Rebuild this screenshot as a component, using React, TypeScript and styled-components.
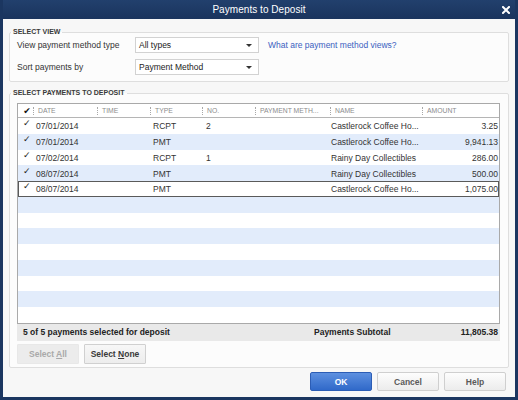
import React from 'react';
import styled, { createGlobalStyle, css } from 'styled-components';

const Global = createGlobalStyle`
  html, body { margin: 0; padding: 0; background: #1b3660; }
  body { width: 518px; height: 400px; overflow: hidden; font-family: "Liberation Sans", Arial, sans-serif; }
  * { box-sizing: border-box; }
`;

const COLS = '15px 64px 53px 52px 53px 75px 92px 77px';

const Window = styled.div`
  width: 518px;
  height: 400px;
  display: flex;
  flex-direction: column;
  background: #1b3660;
  padding: 0 3px 3px 3px;
`;

const TitleBar = styled.div`
  height: 19px;
  flex: none;
  display: grid;
  grid-template-columns: 1fr auto 1fr;
  align-items: center;
  background: linear-gradient(#22406d, #1a345d);
  color: #fff;
  font-size: 10px;
`;

const Title = styled.div`
  grid-column: 2;
  letter-spacing: 0.05px;
`;

const CloseBox = styled.div`
  grid-column: 3;
  justify-self: end;
  display: flex;
  align-items: center;
  padding-right: 5px;
`;

const Content = styled.div`
  flex: 1;
  display: flex;
  flex-direction: column;
  background: #f7f7f7;
  padding: 0 6px;
`;

const Fieldset = styled.fieldset<{ $top: number }>`
  margin: ${p => p.$top}px 0 0 0;
  padding: 0;
  min-width: 0;
  border: 1px solid #dedede;
  border-radius: 2px;
  background: #fcfcfc;
`;

const Legend = styled.legend`
  margin-left: 1px;
  padding: 0 2px;
  font-size: 7px;
  line-height: 10px;
  font-weight: bold;
  color: #3a3a3a;
  text-transform: uppercase;
`;

const ViewGrid = styled.div`
  display: grid;
  grid-template-columns: 109px 124px auto;
  column-gap: 9px;
  row-gap: 6px;
  align-items: center;
  padding: 0 7px 6px 7px;
`;

const Label = styled.div`
  font-size: 8.5px;
  color: #333;
`;

const Select = styled.div`
  height: 16px;
  display: flex;
  align-items: center;
  justify-content: space-between;
  padding: 0 6px 0 3px;
  background: #fff;
  border: 1px solid #d2d2d2;
  font-size: 8.5px;
  color: #222;
`;

const Arrow = styled.span`
  width: 0;
  height: 0;
  border-left: 3px solid transparent;
  border-right: 3px solid transparent;
  border-top: 3px solid #333;
`;

const Link = styled.a`
  font-size: 8.5px;
  color: #3b5fc0;
  text-decoration: none;
`;

const Inner = styled.div`
  padding: 5px 8px 3px 7px;
  display: flex;
  flex-direction: column;
`;

const Table = styled.div`
  border: 1px solid #a9a9a9;
  background: #fff;
`;

const HeadRow = styled.div`
  display: grid;
  grid-template-columns: ${COLS};
  height: 14px;
  border-bottom: 1px solid #b5b5b5;
  background: #fff;
`;

const HeadCell = styled.div<{ $sep?: boolean }>`
  position: relative;
  display: flex;
  align-items: center;
  padding-left: 5px;
  font-size: 6.8px;
  color: #8c8c8c;
  white-space: nowrap;
  overflow: hidden;
  ${p => p.$sep && css`
    &::before {
      content: '';
      position: absolute;
      left: 0;
      top: 3px;
      height: 8px;
      border-left: 1px dotted #a8a8a8;
    }
  `}
`;

const HeadCheck = styled.div`
  display: flex;
  align-items: center;
  justify-content: center;
  font-family: "DejaVu Sans", sans-serif;
  font-size: 9px;
  font-weight: bold;
  color: #111;
  padding-left: 3px;
`;

const Row = styled.div<{ $alt: boolean; $sel?: boolean }>`
  display: grid;
  grid-template-columns: ${COLS};
  height: 15.75px;
  align-items: center;
  background: ${p => (p.$alt ? '#e2ecfb' : '#fff')};
  ${p => p.$sel && css`box-shadow: inset 0 0 0 1px #5a5a5a;`}
`;

const RowCheck = styled.div`
  font-family: "DejaVu Sans", sans-serif;
  font-size: 9px;
  color: #222;
  padding-left: 5px;
  margin-top: -5px;
`;

const Cell = styled.div<{ $right?: boolean; $pad?: number }>`
  font-size: 8.5px;
  color: #333;
  white-space: nowrap;
  overflow: hidden;
  padding-left: ${p => (p.$pad ?? 3)}px;
  padding-right: ${p => (p.$right ? 1 : 0)}px;
  text-align: ${p => (p.$right ? 'right' : 'left')};
  margin-top: 1px;
`;

const Summary = styled.div`
  height: 17px;
  display: grid;
  grid-template-columns: 1fr 120px 64px;
  align-items: center;
  background: #e9e9e9;
  padding: 0 2px 0 6px;
  font-size: 8.5px;
  font-weight: bold;
  color: #222;
`;

const SumAmount = styled.div`
  text-align: right;
`;

const SelectButtons = styled.div`
  display: flex;
  gap: 5px;
  margin-top: 3px;
`;

const SmallButton = styled.button<{ $disabled?: boolean }>`
  width: 62px;
  height: 20px;
  padding: 0;
  font-family: "Liberation Sans", Arial, sans-serif;
  font-size: 8.5px;
  font-weight: bold;
  border-radius: 1px;
  ${p =>
    p.$disabled
      ? css`
          background: #ececec;
          border: 1px solid #e8e8e8;
          color: #a9a9a9;
        `
      : css`
          background: linear-gradient(#f7f7f7, #ededed);
          border: 1px solid #d0d0d0;
          color: #3a3a3a;
        `}
`;

const Footer = styled.div`
  margin-top: auto;
  display: flex;
  justify-content: flex-end;
  gap: 5px;
  padding: 0 3px 6px 0;
`;

const DlgButton = styled.button<{ $primary?: boolean }>`
  width: 62px;
  height: 19px;
  padding: 0;
  font-family: "Liberation Sans", Arial, sans-serif;
  font-size: 8.5px;
  font-weight: bold;
  border-radius: 2px;
  ${p =>
    p.$primary
      ? css`
          background: linear-gradient(#5d90e0, #3069c9);
          border: 1px solid #2c5db5;
          color: #fff;
        `
      : css`
          background: linear-gradient(#fdfdfd, #ececec);
          border: 1px solid #cfcfcf;
          color: #5a5a5a;
        `}
`;

const rows = [
  { date: '07/01/2014', type: 'RCPT', no: '2', name: 'Castlerock Coffee Ho...', amount: '3.25' },
  { date: '07/01/2014', type: 'PMT', no: '', name: 'Castlerock Coffee Ho...', amount: '9,941.13' },
  { date: '07/02/2014', type: 'RCPT', no: '1', name: 'Rainy Day Collectibles', amount: '286.00' },
  { date: '08/07/2014', type: 'PMT', no: '', name: 'Rainy Day Collectibles', amount: '500.00' },
  { date: '08/07/2014', type: 'PMT', no: '', name: 'Castlerock Coffee Ho...', amount: '1,075.00' },
];

const TOTAL_ROWS = 13;

export default function App() {
  const empties = Array.from({ length: TOTAL_ROWS - rows.length }, (_, i) => i + rows.length);
  return (
    <>
      <Global />
      <Window>
        <TitleBar>
          <Title>Payments to Deposit</Title>
          <CloseBox>
            <svg width="8" height="8" viewBox="0 0 8 8">
              <path d="M1 1L7 7M7 1L1 7" stroke="#fff" strokeWidth="2" strokeLinecap="square" />
            </svg>
          </CloseBox>
        </TitleBar>
        <Content>
          <Fieldset $top={8}>
            <Legend>Select View</Legend>
            <ViewGrid>
              <Label>View payment method type</Label>
              <Select>
                All types
                <Arrow />
              </Select>
              <Link href="#">What are payment method views?</Link>
              <Label>Sort payments by</Label>
              <Select>
                Payment Method
                <Arrow />
              </Select>
              <span />
            </ViewGrid>
          </Fieldset>
          <Fieldset $top={6}>
            <Legend>Select Payments to Deposit</Legend>
            <Inner>
              <Table>
                <HeadRow>
                  <HeadCheck>✔</HeadCheck>
                  <HeadCell $sep>DATE</HeadCell>
                  <HeadCell $sep>TIME</HeadCell>
                  <HeadCell $sep>TYPE</HeadCell>
                  <HeadCell $sep>NO.</HeadCell>
                  <HeadCell $sep>PAYMENT METH...</HeadCell>
                  <HeadCell $sep>NAME</HeadCell>
                  <HeadCell $sep>AMOUNT</HeadCell>
                </HeadRow>
                {rows.map((r, i) => (
                  <Row key={i} $alt={i % 2 === 1} $sel={i === rows.length - 1}>
                    <RowCheck>✓</RowCheck>
                    <Cell>{r.date}</Cell>
                    <Cell />
                    <Cell>{r.type}</Cell>
                    <Cell $pad={4}>{r.no}</Cell>
                    <Cell />
                    <Cell $pad={1}>{r.name}</Cell>
                    <Cell $right>{r.amount}</Cell>
                  </Row>
                ))}
                {empties.map(i => (
                  <Row key={i} $alt={i % 2 === 1} />
                ))}
              </Table>
              <Summary>
                <div>5 of 5 payments selected for deposit</div>
                <div>Payments Subtotal</div>
                <SumAmount>11,805.38</SumAmount>
              </Summary>
              <SelectButtons>
                <SmallButton $disabled>
                  Select <u>A</u>ll
                </SmallButton>
                <SmallButton>
                  Select <u>N</u>one
                </SmallButton>
              </SelectButtons>
            </Inner>
          </Fieldset>
          <Footer>
            <DlgButton $primary>OK</DlgButton>
            <DlgButton>Cancel</DlgButton>
            <DlgButton>Help</DlgButton>
          </Footer>
        </Content>
      </Window>
    </>
  );
}
